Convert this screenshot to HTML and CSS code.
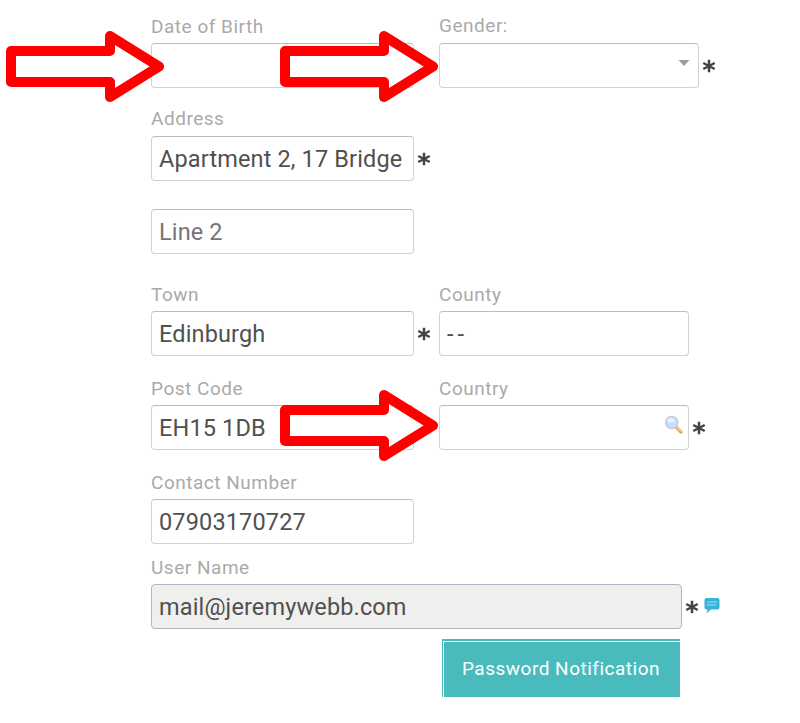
FILE: index.html
```html
<!DOCTYPE html>
<html lang="en">
<head>
	<meta charset="UTF-8">
	<meta name="viewport" content="width=device-width, initial-scale=1.0">
	<title>Personal Details</title>
	<link rel="stylesheet" href="styles.css">
</head>
<body>

<!-- Shared icons -->
<svg class="defs" width="0" height="0">
	<symbol id="star" viewBox="0 0 14 14">
		<path d="M7 0.8V13.2M1.3 4L12.7 10M12.7 4L1.3 10" fill="none" stroke="#444" stroke-width="2.5"/>
	</symbol>
	<symbol id="arrow" viewBox="0 0 158 72">
		<path d="M5 20H104V5L153 35.5L104 66V51H5Z" fill="#fff" stroke="#f00" stroke-width="10" stroke-linejoin="round"/>
	</symbol>
</svg>

<form class="details">
	<div class="row row-first">
		<div class="field">
			<label for="dob">Date of Birth</label>
			<div class="control"><input type="text" id="dob"></div>
		</div>
		<div class="field">
			<label for="gender" class="label-raised">Gender:</label>
			<div class="control">
				<div class="input-box wide">
					<input type="text" id="gender">
					<svg class="caret" width="12" height="6" viewBox="0 0 12 6"><path d="M0.5 0H11.5L6 6Z" fill="#9d9d9d"/></svg>
				</div>
				<svg class="star"><use href="#star"/></svg>
			</div>
		</div>
	</div>

	<!-- Address -->
	<div class="row">
		<div class="field">
			<label for="line1" class="label-raised">Address</label>
			<div class="control">
				<input type="text" id="line1" value="Apartment 2, 17 Bridge">
				<svg class="star"><use href="#star"/></svg>
			</div>
		</div>
	</div>
	<div class="row row-line2">
		<div class="field">
			<div class="control"><input type="text" id="line2" placeholder="Line 2"></div>
		</div>
	</div>
	<div class="row">
		<div class="field">
			<label for="town">Town</label>
			<div class="control">
				<input type="text" id="town" value="Edinburgh">
				<svg class="star"><use href="#star"/></svg>
			</div>
		</div>
		<div class="field">
			<label for="county">County</label>
			<div class="control"><input type="text" id="county" class="short dashes" value="--"></div>
		</div>
	</div>
	<div class="row">
		<div class="field">
			<label for="postcode">Post Code</label>
			<div class="control"><input type="text" id="postcode" value="EH15 1DB"></div>
		</div>
		<div class="field">
			<label for="country">Country</label>
			<div class="control">
				<div class="input-box short">
					<input type="text" id="country">
					<svg class="search" width="20" height="20" viewBox="0 0 20 20">
						<path d="M12.5 12.5L17 17" stroke="#e8a558" stroke-width="3.4" stroke-linecap="round"/>
						<path d="M13 12.3L17 16.2" stroke="#fbd394" stroke-width="1.2" stroke-linecap="round"/>
						<circle cx="7.7" cy="7.5" r="6" fill="#c3e1fc" stroke="#c3cadc" stroke-width="1.6"/>
						<ellipse cx="7.2" cy="5.4" rx="3.6" ry="2.2" fill="#e6f4ff"/>
					</svg>
				</div>
				<svg class="star"><use href="#star"/></svg>
			</div>
		</div>
	</div>
	<div class="row">
		<div class="field">
			<label for="phone">Contact Number</label>
			<div class="control"><input type="text" id="phone" value="07903170727"></div>
		</div>
	</div>

	<!-- Login -->
	<div class="row row-user">
		<div class="field full">
			<label for="user">User Name</label>
			<div class="control">
				<input type="text" id="user" class="locked" value="mail@jeremywebb.com" readonly>
				<svg class="star"><use href="#star"/></svg>
				<svg class="note" width="16" height="16" viewBox="0 0 16 16">
					<path d="M2.5 0H13.5Q15.5 0 15.5 2V9.5Q15.5 11.5 13.5 11.5H7L2.5 15.5L3.5 11.5H2.5Q0.5 11.5 0.5 9.5V2Q0.5 0 2.5 0Z" fill="#35b4da"/>
					<path d="M3 4H13M3 7H12" stroke="#9fe0f3" stroke-width="1.2"/>
				</svg>
			</div>
		</div>
	</div>
	<div class="actions">
		<button type="button"><span>Password Notification</span></button>
	</div>
</form>

<!-- Markers over the fields still to be filled in -->
<svg class="marker marker-dob"><use href="#arrow"/></svg>
<svg class="marker marker-gender"><use href="#arrow"/></svg>
<svg class="marker marker-country"><use href="#arrow"/></svg>

</body>
</html>
```

FILE: styles.css
```css
* {
	box-sizing: border-box;
}
body {
	margin: 0;
	background-color: #fff;
	font-family: Roboto, "Liberation Sans", sans-serif;
	position: relative;
}
.defs {
	display: none;
}
.details {
	width: 600px;
	padding-top: 15px;
	margin-left: 151px;
}
.row {
	display: grid;
	grid-template-columns: 288px 1fr;
	margin-bottom: 21px;
}
.row-first {
	margin-bottom: 20px;
}
.row-line2 {
	margin-top: 28px;
	margin-bottom: 29px;
}
.row-user {
	margin-top: -9px;
	margin-bottom: 10px;
}
.full {
	grid-column: 1 / 3;
}
label {
	display: block;
	height: 28px;
	line-height: 23px;
	font-size: 19px;
	letter-spacing: 0.52px;
	color: #aaa;
}
.label-raised {
	line-height: 21px;
}
.control {
	display: flex;
	align-items: center;
}
input {
	width: 263px;
	height: 45px;
	padding: 0 7px;
	border: 1px solid #d2d2d2;
	border-top-color: #bdbdbd;
	border-radius: 4px;
	background-color: #fff;
	font-family: inherit;
	font-size: 23.5px;
	letter-spacing: 0.14px;
	color: #505050;
	outline: none;
}
input::placeholder {
	color: #757575;
}
.short {
	width: 250px;
}
.wide {
	width: 260px;
}
.dashes {
	letter-spacing: 4px;
}
.locked {
	width: 531px;
	background-color: #efefed;
	border-color: #b3b3c6;
}
.input-box {
	position: relative;
}
.input-box input {
	display: block;
	width: 100%;
}
.caret {
	position: absolute;
	right: 9px;
	top: 17px;
}
.search {
	position: absolute;
	right: 5px;
	top: 10px;
}
.star {
	width: 14px;
	height: 14px;
	margin-left: 3px;
}
.note {
	margin-left: 5px;
	margin-bottom: 1px;
}
.actions {
	padding-left: 291px;
}
button {
	display: block;
	width: 238px;
	height: 58px;
	padding: 1px 0 0 1px;
	border: 0;
	background-color: #4abbbc;
	font-family: inherit;
	font-size: 19px;
	letter-spacing: 0.5px;
	color: #fff;
}
button span {
	display: flex;
	align-items: center;
	justify-content: center;
	height: 56px;
	padding: 0 2px 1px 0;
	border-top: 1px solid #fff;
	border-left: 1px solid #fff;
}
.marker {
	position: absolute;
	width: 158px;
	height: 72px;
}
.marker-dob {
	left: 6px;
	top: 31px;
}
.marker-gender {
	left: 280px;
	top: 31px;
}
.marker-country {
	left: 280px;
	top: 390px;
}
```
